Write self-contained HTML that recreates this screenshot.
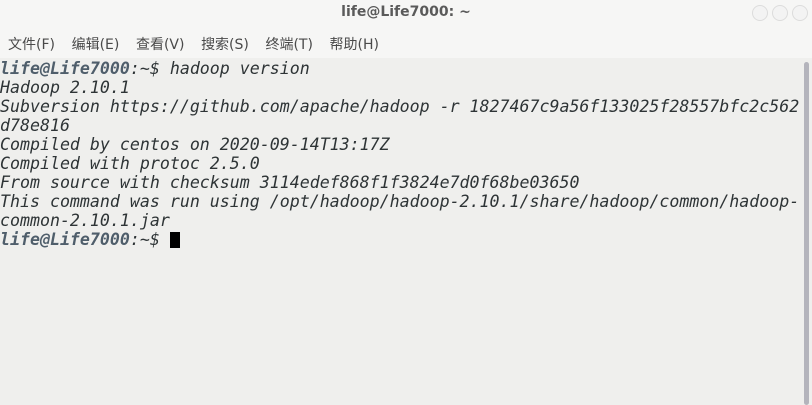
<!DOCTYPE html>
<html><head><meta charset="utf-8"><style>
html,body{margin:0;padding:0;width:812px;height:405px;overflow:hidden;background:#f6f6f5;}
.title{position:absolute;left:0;top:4px;width:812px;height:20px;text-align:center;line-height:20px;font:bold 14px "DejaVu Sans","Liberation Sans",sans-serif;color:#5a5a5a;}
.btn{position:absolute;top:5px;width:14px;height:14px;border-radius:50%;border:1px solid #dcdcdc;background:#f3f3f3;}
.menu{position:absolute;top:34px;left:8px;font:14px "DejaVu Sans","Noto Sans CJK SC",sans-serif;color:#4a4a4a;word-spacing:0}
.menu span{margin-right:16.6px}
.term{position:absolute;left:0;top:58px;width:812px;height:347px;background:#efefed;}
pre{margin:0;position:absolute;left:0;top:1px;font:italic 16.6px/19px "DejaVu Sans Mono",monospace;color:#2e3436;}
.p{font-weight:bold;color:#4f5e6b}
.sb{position:absolute;left:804px;top:62px;width:5px;height:343px;background:#b4b4bc;border-radius:3px}
.cur{display:inline-block;width:10px;height:16px;background:#000;vertical-align:-3px}
</style></head><body>
<div class="title">life@Life7000: ~</div>
<div class="btn" style="left:752px"></div><div class="btn" style="left:772px"></div><div class="btn" style="left:792px"></div>
<div class="menu"><span>文件(F)</span><span>编辑(E)</span><span>查看(V)</span><span>搜索(S)</span><span>终端(T)</span><span>帮助(H)</span></div>
<div class="term"><pre><span class="p">life@Life7000</span>:~$ hadoop version
Hadoop 2.10.1
Subversion https://github.com/apache/hadoop -r 1827467c9a56f133025f28557bfc2c562
d78e816
Compiled by centos on 2020-09-14T13:17Z
Compiled with protoc 2.5.0
From source with checksum 3114edef868f1f3824e7d0f68be03650
This command was run using /opt/hadoop/hadoop-2.10.1/share/hadoop/common/hadoop-
common-2.10.1.jar
<span class="p">life@Life7000</span>:~$ <span class="cur"></span></pre></div>
<div class="sb"></div>
</body></html>
